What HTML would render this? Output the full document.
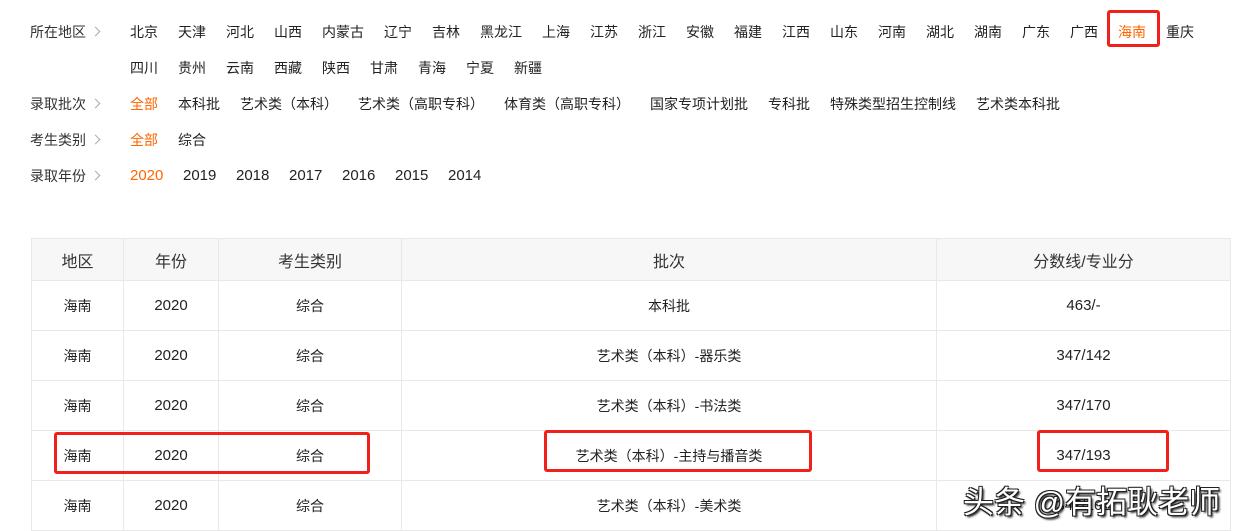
<!DOCTYPE html>
<html><head><meta charset="utf-8"><style>
body{margin:0;width:1240px;height:527px;overflow:hidden;background:#fff;font-family:"Liberation Sans","Noto Sans CJK SC",sans-serif;color:#222;position:relative}
.row{position:absolute;left:0;height:20px;font-size:14px;line-height:20px;white-space:nowrap}
.lab{position:absolute;left:30px;color:#333}
.lab:after{content:"";position:absolute;left:62px;top:6px;width:6px;height:6px;border-top:1px solid #aaa;border-right:1px solid #aaa;transform:rotate(45deg)}
.opts{position:absolute;left:130px;display:flex;gap:20px}
.o{color:#f60}
.yr span{font-size:15px;display:inline-block;width:33px}
.box{position:absolute;border:3px solid #f0201a;border-radius:3px;box-sizing:border-box}
table{position:absolute;left:31px;top:238px;width:1200px;border-collapse:collapse;table-layout:fixed}
td,th{border:1px solid #e8e8e8;text-align:center;font-size:14px;font-weight:normal;height:49px;padding:0}
th{background:#f7f7f7;font-size:16px;height:41px;color:#333}
td.n{font-size:15px}
.wm{position:absolute;left:963px;top:477px;font-size:31px;color:#fff;text-shadow:-1px -1px 0 #222,1px 1px 0 #222,1px -1px 0 #222,-1px 1px 0 #222,2px 2px 2px #000}
</style></head><body>
<div class="row" style="top:22px"><span class="lab">所在地区</span><div class="opts"><span>北京</span><span>天津</span><span>河北</span><span>山西</span><span>内蒙古</span><span>辽宁</span><span>吉林</span><span>黑龙江</span><span>上海</span><span>江苏</span><span>浙江</span><span>安徽</span><span>福建</span><span>江西</span><span>山东</span><span>河南</span><span>湖北</span><span>湖南</span><span>广东</span><span>广西</span><span class="o">海南</span><span>重庆</span></div></div>
<div class="row" style="top:58px"><div class="opts"><span>四川</span><span>贵州</span><span>云南</span><span>西藏</span><span>陕西</span><span>甘肃</span><span>青海</span><span>宁夏</span><span>新疆</span></div></div>
<div class="row" style="top:94px"><span class="lab">录取批次</span><div class="opts"><span class="o">全部</span><span>本科批</span><span>艺术类（本科）</span><span>艺术类（高职专科）</span><span>体育类（高职专科）</span><span>国家专项计划批</span><span>专科批</span><span>特殊类型招生控制线</span><span>艺术类本科批</span></div></div>
<div class="row" style="top:130px"><span class="lab">考生类别</span><div class="opts"><span class="o">全部</span><span>综合</span></div></div>
<div class="row" style="top:166px"><span class="lab">录取年份</span><div class="opts yr"><span class="o">2020</span><span>2019</span><span>2018</span><span>2017</span><span>2016</span><span>2015</span><span>2014</span></div></div>
<div class="box" style="left:1107px;top:10px;width:53px;height:37px"></div>
<table>
<colgroup><col style="width:92px"><col style="width:95px"><col style="width:183px"><col style="width:535px"><col></colgroup>
<tr><th>地区</th><th>年份</th><th>考生类别</th><th>批次</th><th>分数线/专业分</th></tr>
<tr><td>海南</td><td class="n">2020</td><td>综合</td><td>本科批</td><td class="n">463/-</td></tr>
<tr><td>海南</td><td class="n">2020</td><td>综合</td><td>艺术类（本科）-器乐类</td><td class="n">347/142</td></tr>
<tr><td>海南</td><td class="n">2020</td><td>综合</td><td>艺术类（本科）-书法类</td><td class="n">347/170</td></tr>
<tr><td>海南</td><td class="n">2020</td><td>综合</td><td>艺术类（本科）-主持与播音类</td><td class="n">347/193</td></tr>
<tr><td>海南</td><td class="n">2020</td><td>综合</td><td>艺术类（本科）-美术类</td><td class="n">347/162</td></tr>
</table>
<div class="box" style="left:54px;top:432px;width:316px;height:42px"></div>
<div class="box" style="left:544px;top:430px;width:268px;height:42px"></div>
<div class="box" style="left:1037px;top:430px;width:132px;height:42px"></div>
<div class="wm">头条 @有拓耿老师</div>
</body></html>
